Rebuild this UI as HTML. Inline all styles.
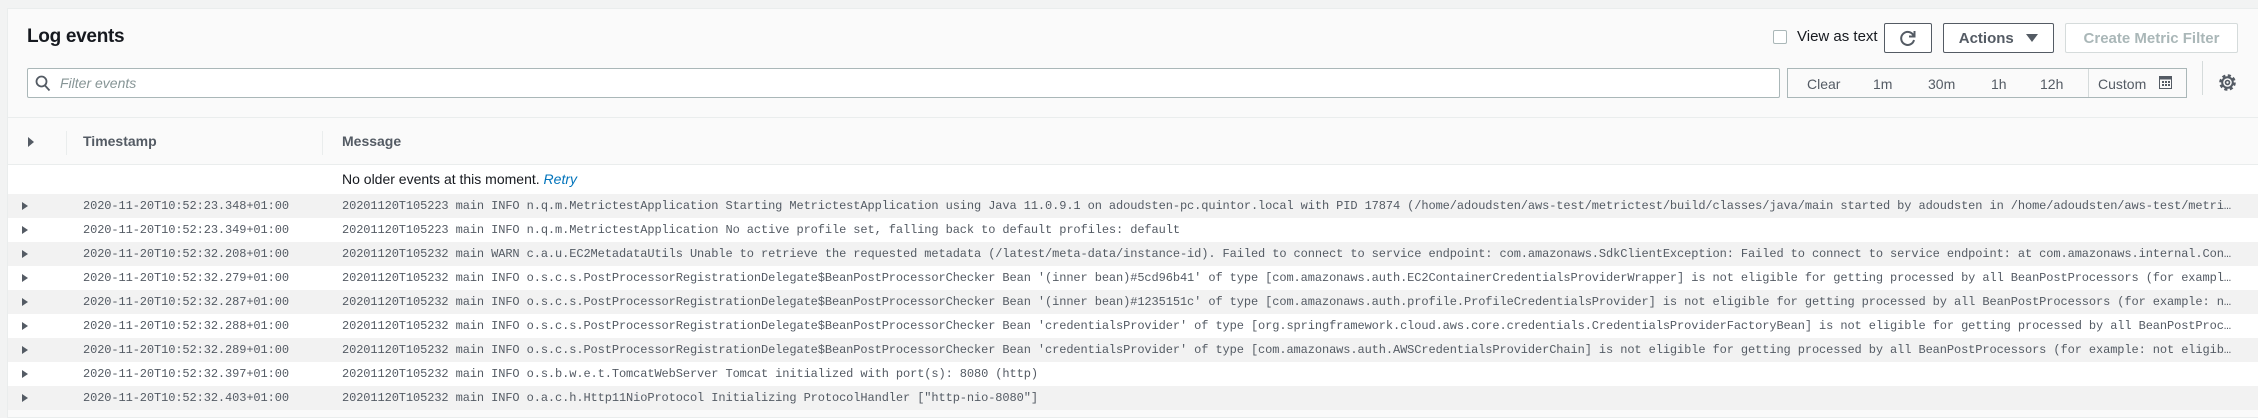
<!DOCTYPE html>
<html><head><meta charset="utf-8"><style>
*{box-sizing:border-box;margin:0;padding:0}
body{width:2258px;height:410px;overflow:hidden;background:#f2f3f3;font-family:"Liberation Sans",sans-serif;color:#16191f;position:relative}
.panel{position:absolute;left:7px;top:8px;width:2260px;height:410px;background:#fafafa;border:1px solid #eaeded}
.abs{position:absolute}
h1{position:absolute;left:19px;top:17px;font-size:19px;font-weight:bold;letter-spacing:-0.3px}
.btn{position:absolute;top:14px;height:30px;border:1px solid #545b64;border-radius:2px;background:#fff;font-weight:bold;font-size:15px;color:#545b64;display:flex;align-items:center;justify-content:center}
.mono{font-family:"Liberation Mono",monospace;font-size:12px;letter-spacing:-0.1px;color:#545b64}
.row{position:absolute;left:0;width:2250px;height:24px}
.row span{position:absolute;top:5px;white-space:nowrap}
.row .arr{left:14px;top:8px;width:0;height:0;border-left:6px solid #545b64;border-top:4px solid transparent;border-bottom:4px solid transparent}
.msg{left:334px;width:1894px;overflow:hidden;text-overflow:ellipsis}
.g{background:#f2f2f2}.w{background:#fff}
.tr span{position:absolute;top:7px;font-size:14px;color:#545b64}
</style></head><body>
<div class="panel">
<h1>Log events</h1>
<div class="abs" style="left:1765px;top:21px;width:14px;height:14px;border:1px solid #aab7b8;border-radius:2px;background:#fff"></div>
<div class="abs" style="left:1789px;top:19px;font-size:15px">View as text</div>
<div class="btn" style="left:1876px;width:48px"><svg width="18" height="18" viewBox="0 0 18 18"><path d="M14.5 6.5A6.5 6.5 0 1 0 15 11" fill="none" stroke="#545b64" stroke-width="2"/><path d="M15.5 2v5.5H10" fill="none" stroke="#545b64" stroke-width="2"/></svg></div>
<div class="btn" style="left:1935px;width:111px">Actions&nbsp;&nbsp;&nbsp;<span style="display:inline-block;width:0;height:0;border-top:8px solid #545b64;border-left:6px solid transparent;border-right:6px solid transparent"></span></div>
<div class="btn" style="left:2057px;width:173px;border-color:#d5dbdb;color:#aab7b8">Create Metric Filter</div>
<div class="abs" style="left:19px;top:59px;width:1753px;height:30px;border:1px solid #aab7b8;border-radius:2px;background:#fff">
<svg class="abs" style="left:7px;top:6px" width="16" height="17" viewBox="0 0 16 17"><circle cx="6.5" cy="6.5" r="5" fill="none" stroke="#545b64" stroke-width="1.8"/><path d="M10 10.5l4.5 5" stroke="#545b64" stroke-width="1.8"/></svg>
<div class="abs" style="left:32px;top:6px;font-size:14px;font-style:italic;color:#879596">Filter events</div></div>
<div class="abs tr" style="left:1779px;top:59px;width:400px;height:30px;border:1px solid #aab7b8;background:#fafafa">
<span style="left:19px">Clear</span><span style="left:85px">1m</span><span style="left:140px">30m</span><span style="left:203px">1h</span><span style="left:252px">12h</span>
<div class="abs" style="left:300px;top:0;height:28px;border-left:1px solid #d5dbdb"></div>
<span style="left:310px">Custom</span>
<svg class="abs" style="left:371px;top:7px" width="13" height="13" viewBox="0 0 13 13"><rect x="0.5" y="0.5" width="12" height="12" fill="none" stroke="#545b64"/><rect x="0.5" y="0.5" width="12" height="3" fill="#545b64"/><g fill="#545b64"><rect x="3" y="5" width="2" height="2"/><rect x="6" y="5" width="2" height="2"/><rect x="9" y="5" width="2" height="2"/><rect x="3" y="8" width="2" height="2"/><rect x="6" y="8" width="2" height="2"/><rect x="9" y="8" width="2" height="2"/></g></svg></div>
<div class="abs" style="left:2194px;top:52px;height:34px;border-left:1px solid #d5dbdb"></div>
<svg class="abs" style="left:2210px;top:64px" width="19" height="19" viewBox="0 0 19 19"><circle cx="9.5" cy="9.5" r="6.8" fill="none" stroke="#545b64" stroke-width="3" stroke-dasharray="3 2.35"/><circle cx="9.5" cy="9.5" r="5.3" fill="none" stroke="#545b64" stroke-width="2"/><circle cx="9.5" cy="9.5" r="2" fill="none" stroke="#545b64" stroke-width="1.6"/></svg>
<div class="abs" style="left:0;top:108px;width:2250px;border-top:1px solid #eaeded"></div>
<div class="abs" style="left:20px;top:128px;width:0;height:0;border-left:6px solid #545b64;border-top:5px solid transparent;border-bottom:5px solid transparent"></div>
<div class="abs" style="left:58px;top:122px;height:24px;border-left:1px solid #eaeded"></div>
<div class="abs" style="left:75px;top:124px;font-size:14px;font-weight:bold;color:#545b64">Timestamp</div>
<div class="abs" style="left:314px;top:122px;height:24px;border-left:1px solid #eaeded"></div>
<div class="abs" style="left:334px;top:124px;font-size:14px;font-weight:bold;color:#545b64">Message</div>
<div class="abs w" style="left:0;top:155px;width:2250px;height:30px;border-top:1px solid #eaeded"><div class="abs" style="left:334px;top:6px;font-size:14px">No older events at this moment. <i style="color:#0073bb">Retry</i></div></div>
<div class="mono">
<div class="row g" style="top:185px"><i class="arr abs"></i><span style="left:75px">2020-11-20T10:52:23.348+01:00</span><span class="msg">20201120T105223 main INFO n.q.m.MetrictestApplication Starting MetrictestApplication using Java 11.0.9.1 on adoudsten-pc.quintor.local with PID 17874 (/home/adoudsten/aws-test/metrictest/build/classes/java/main started by adoudsten in /home/adoudsten/aws-test/metrictest)</span></div>
<div class="row w" style="top:209px"><i class="arr abs"></i><span style="left:75px">2020-11-20T10:52:23.349+01:00</span><span class="msg">20201120T105223 main INFO n.q.m.MetrictestApplication No active profile set, falling back to default profiles: default</span></div>
<div class="row g" style="top:233px"><i class="arr abs"></i><span style="left:75px">2020-11-20T10:52:32.208+01:00</span><span class="msg">20201120T105232 main WARN c.a.u.EC2MetadataUtils Unable to retrieve the requested metadata (/latest/meta-data/instance-id). Failed to connect to service endpoint: com.amazonaws.SdkClientException: Failed to connect to service endpoint: at com.amazonaws.internal.ConnectionUtils</span></div>
<div class="row w" style="top:257px"><i class="arr abs"></i><span style="left:75px">2020-11-20T10:52:32.279+01:00</span><span class="msg">20201120T105232 main INFO o.s.c.s.PostProcessorRegistrationDelegate$BeanPostProcessorChecker Bean '(inner bean)#5cd96b41' of type [com.amazonaws.auth.EC2ContainerCredentialsProviderWrapper] is not eligible for getting processed by all BeanPostProcessors (for example: not eligible)</span></div>
<div class="row g" style="top:281px"><i class="arr abs"></i><span style="left:75px">2020-11-20T10:52:32.287+01:00</span><span class="msg">20201120T105232 main INFO o.s.c.s.PostProcessorRegistrationDelegate$BeanPostProcessorChecker Bean '(inner bean)#1235151c' of type [com.amazonaws.auth.profile.ProfileCredentialsProvider] is not eligible for getting processed by all BeanPostProcessors (for example: not eligible)</span></div>
<div class="row w" style="top:305px"><i class="arr abs"></i><span style="left:75px">2020-11-20T10:52:32.288+01:00</span><span class="msg">20201120T105232 main INFO o.s.c.s.PostProcessorRegistrationDelegate$BeanPostProcessorChecker Bean 'credentialsProvider' of type [org.springframework.cloud.aws.core.credentials.CredentialsProviderFactoryBean] is not eligible for getting processed by all BeanPostProcessors</span></div>
<div class="row g" style="top:329px"><i class="arr abs"></i><span style="left:75px">2020-11-20T10:52:32.289+01:00</span><span class="msg">20201120T105232 main INFO o.s.c.s.PostProcessorRegistrationDelegate$BeanPostProcessorChecker Bean 'credentialsProvider' of type [com.amazonaws.auth.AWSCredentialsProviderChain] is not eligible for getting processed by all BeanPostProcessors (for example: not eligible)</span></div>
<div class="row w" style="top:353px"><i class="arr abs"></i><span style="left:75px">2020-11-20T10:52:32.397+01:00</span><span class="msg">20201120T105232 main INFO o.s.b.w.e.t.TomcatWebServer Tomcat initialized with port(s): 8080 (http)</span></div>
<div class="row g" style="top:377px"><i class="arr abs"></i><span style="left:75px">2020-11-20T10:52:32.403+01:00</span><span class="msg">20201120T105232 main INFO o.a.c.h.Http11NioProtocol Initializing ProtocolHandler ["http-nio-8080"]</span></div>
</div>
</div>
</body></html>
